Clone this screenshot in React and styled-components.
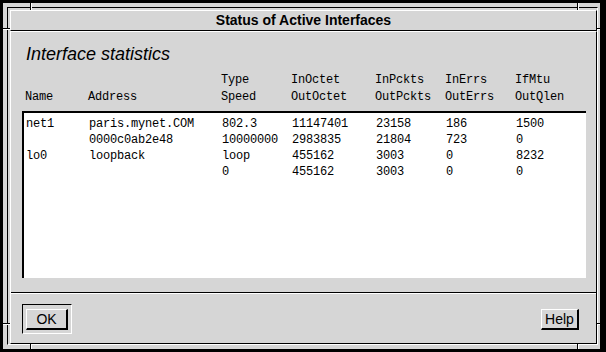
import styled, { createGlobalStyle } from "styled-components";

const GlobalStyle = createGlobalStyle`
  html, body {
    margin: 0;
    padding: 0;
    background: #000;
  }
`;

const grey = "#d6d6d6";

const Screen = styled.div`
  width: 606px;
  height: 352px;
  box-sizing: border-box;
  background: #000;
  padding: 3px 6px 3px 3px;
`;

const ResizeFrame = styled.div`
  position: relative;
  height: 100%;
  box-sizing: border-box;
  background: ${grey};
  padding: 4px 2px 4px 4px;
`;

const FrameInset = styled.div`
  height: 100%;
  box-sizing: border-box;
  border-top: 1px solid #000;
  border-left: 1px solid #000;
  border-right: 1px solid #fff;
  border-bottom: 1px solid #fff;
  padding: 2px 0 0 2px;
  display: flex;
  flex-direction: column;
`;

// little grooves marking the resize corners
const Tick = styled.span`
  position: absolute;
  ${p =>
    p.vertical
      ? `width: 1px; height: ${p.len}px; border-left: 1px solid #000; background: #fff;`
      : `height: 1px; width: ${p.len}px; border-top: 1px solid #000; background: #fff;`}
  ${p => (p.top !== undefined ? `top: ${p.top}px;` : "")}
  ${p => (p.left !== undefined ? `left: ${p.left}px;` : "")}
`;

const TitleBar = styled.div`
  height: 21px;
  box-sizing: border-box;
  border-top: 1px solid #fff;
  border-left: 1px solid #fff;
  border-bottom: 1px solid #000;
  border-right: 1px solid #000;
  font-family: "Liberation Sans", Arial, sans-serif;
  font-weight: bold;
  font-size: 14px;
  line-height: 18px;
  text-align: center;
  color: #000;
`;

const Body = styled.div`
  flex: 1;
  box-sizing: border-box;
  border-top: 1px solid #fff;
  border-left: 1px solid #fff;
  border-bottom: 1px solid #000;
  border-right: 1px solid #000;
  display: flex;
  flex-direction: column;
`;

const Heading = styled.div`
  margin: 11px 0 0 15px;
  font-family: "Liberation Sans", Arial, sans-serif;
  font-style: italic;
  font-size: 18px;
  line-height: 22px;
  color: #000;
`;

const Grid = styled.div`
  display: grid;
  grid-template-columns: 63px 133px 70px 84px 70px 70px 1fr;
  font-family: "Liberation Mono", "DejaVu Sans Mono", monospace;
  font-size: 12px;
  letter-spacing: -0.2px;
  color: #000;
  white-space: pre;
`;

const HeaderGrid = styled(Grid)`
  margin: 7px 0 0 14px;
  line-height: 17px;
`;

const List = styled.div`
  height: 167px;
  box-sizing: border-box;
  margin: 5px 10px 0 11px;
  background: #fff;
  border-top: 2px solid #000;
  border-left: 2px solid #000;
  padding: 3px 0 0 2px;
`;

const RowGrid = styled(Grid)`
  line-height: 16px;
`;

const Separator = styled.div`
  margin-top: 14px;
  height: 1px;
  border-top: 1px solid #000;
  background: #fff;
`;

const ButtonBar = styled.div`
  flex: 1;
  display: flex;
  justify-content: space-between;
  align-items: flex-start;
  padding: 10px 17px 0 11px;
`;

const DefaultRing = styled.div`
  width: 50px;
  height: 30px;
  box-sizing: border-box;
  border-top: 1px solid #000;
  border-left: 1px solid #000;
  border-bottom: 1px solid #fff;
  border-right: 1px solid #fff;
  padding: 4px 0 0 3px;
`;

const Button = styled.button`
  width: ${p => p.w}px;
  height: 21px;
  margin-top: ${p => (p.offset ? 5 : 0)}px;
  box-sizing: border-box;
  padding: 0;
  background: ${grey};
  border-top: 1px solid #fff;
  border-left: 1px solid #fff;
  border-bottom: 2px solid #000;
  border-right: 2px solid #000;
  font-family: "Liberation Sans", Arial, sans-serif;
  font-size: 14px;
  line-height: 18px;
  color: #000;
`;

const headers = [
  ["", "", "Type", "InOctet", "InPckts", "InErrs", "IfMtu"],
  ["Name", "Address", "Speed", "OutOctet", "OutPckts", "OutErrs", "OutQlen"]
];

const rows = [
  ["net1", "paris.mynet.COM", "802.3", "11147401", "23158", "186", "1500"],
  ["", "0000c0ab2e48", "10000000", "2983835", "21804", "723", "0"],
  ["lo0", "loopback", "loop", "455162", "3003", "0", "8232"],
  ["", "", "0", "455162", "3003", "0", "0"]
];

const ticks = [
  { vertical: true, len: 7, top: 0, left: 27 },
  { vertical: true, len: 7, top: 0, left: 574 },
  { vertical: true, len: 5, top: 341, left: 27 },
  { vertical: true, len: 5, top: 341, left: 574 },
  { len: 7, top: 25, left: 0 },
  { len: 7, top: 320, left: 0 },
  { len: 3, top: 25, left: 594 },
  { len: 3, top: 320, left: 594 }
];

export default function App() {
  return (
    <Screen>
      <GlobalStyle />
      <ResizeFrame>
        {ticks.map((t, i) => (
          <Tick key={i} {...t} />
        ))}
        <FrameInset>
          <TitleBar>Status of Active Interfaces</TitleBar>
          <Body>
            <Heading>Interface statistics</Heading>
            <HeaderGrid>
              {headers.map((r, i) =>
                r.map((c, j) => <span key={`${i}-${j}`}>{c}</span>)
              )}
            </HeaderGrid>
            <List>
              <RowGrid>
                {rows.map((r, i) =>
                  r.map((c, j) => <span key={`${i}-${j}`}>{c}</span>)
                )}
              </RowGrid>
            </List>
            <Separator />
            <ButtonBar>
              <DefaultRing>
                <Button w={42}>OK</Button>
              </DefaultRing>
              <Button w={38} offset>
                Help
              </Button>
            </ButtonBar>
          </Body>
        </FrameInset>
      </ResizeFrame>
    </Screen>
  );
}
